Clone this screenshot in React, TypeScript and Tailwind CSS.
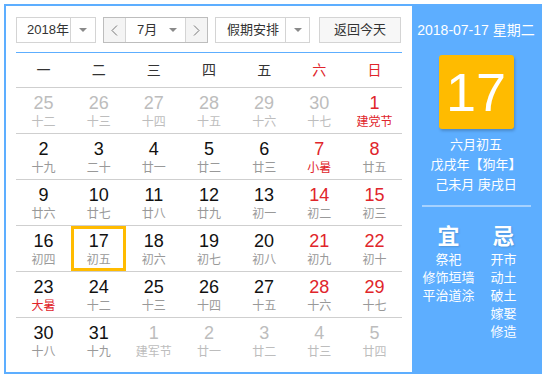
import React from 'react';

type Day = {
  n: number;
  lunar: string;
  other?: boolean;
  redNum?: boolean;
  redLunar?: boolean;
  selected?: boolean;
};

const weeks: Day[][] = [
  [
    { n: 25, lunar: '十二', other: true },
    { n: 26, lunar: '十三', other: true },
    { n: 27, lunar: '十四', other: true },
    { n: 28, lunar: '十五', other: true },
    { n: 29, lunar: '十六', other: true },
    { n: 30, lunar: '十七', other: true },
    { n: 1, lunar: '建党节', redNum: true, redLunar: true },
  ],
  [
    { n: 2, lunar: '十九' },
    { n: 3, lunar: '二十' },
    { n: 4, lunar: '廿一' },
    { n: 5, lunar: '廿二' },
    { n: 6, lunar: '廿三' },
    { n: 7, lunar: '小暑', redNum: true, redLunar: true },
    { n: 8, lunar: '廿五', redNum: true },
  ],
  [
    { n: 9, lunar: '廿六' },
    { n: 10, lunar: '廿七' },
    { n: 11, lunar: '廿八' },
    { n: 12, lunar: '廿九' },
    { n: 13, lunar: '初一' },
    { n: 14, lunar: '初二', redNum: true },
    { n: 15, lunar: '初三', redNum: true },
  ],
  [
    { n: 16, lunar: '初四' },
    { n: 17, lunar: '初五', selected: true },
    { n: 18, lunar: '初六' },
    { n: 19, lunar: '初七' },
    { n: 20, lunar: '初八' },
    { n: 21, lunar: '初九', redNum: true },
    { n: 22, lunar: '初十', redNum: true },
  ],
  [
    { n: 23, lunar: '大暑', redLunar: true },
    { n: 24, lunar: '十二' },
    { n: 25, lunar: '十三' },
    { n: 26, lunar: '十四' },
    { n: 27, lunar: '十五' },
    { n: 28, lunar: '十六', redNum: true },
    { n: 29, lunar: '十七', redNum: true },
  ],
  [
    { n: 30, lunar: '十八' },
    { n: 31, lunar: '十九' },
    { n: 1, lunar: '建军节', other: true },
    { n: 2, lunar: '廿一', other: true },
    { n: 3, lunar: '廿二', other: true },
    { n: 4, lunar: '廿三', other: true },
    { n: 5, lunar: '廿四', other: true },
  ],
];

const weekdays = ['一', '二', '三', '四', '五', '六', '日'];

const Caret = () => (
  <svg width="8" height="4" viewBox="0 0 8 4">
    <path d="M0 0 L8 0 L4 4 Z" fill="#8a8a8a" />
  </svg>
);

const Chevron = ({ dir }: { dir: 'left' | 'right' }) => (
  <svg width="7" height="11" viewBox="0 0 7 11">
    <path
      d={dir === 'left' ? 'M6 0.5 L1 5.5 L6 10.5' : 'M1 0.5 L6 5.5 L1 10.5'}
      fill="none"
      stroke="#777"
      strokeWidth="1"
    />
  </svg>
);

const Cell: React.FC<{ d: Day }> = ({ d }) => {
  const numColor = d.other ? 'text-[#bdbdbd]' : d.redNum ? 'text-[#e0252b]' : 'text-[#111]';
  const lunarColor = d.other ? 'text-[#bdbdbd]' : d.redLunar ? 'text-[#e0252b]' : 'text-[#999]';
  return (
    <div className="relative flex flex-col items-center pt-[4px]">
      {d.selected && <div className="absolute inset-0 border-[3px] border-[#ffbb00]" />}
      <span className={`text-[18px] leading-[22px] ${numColor}`}>{d.n}</span>
      <span className={`text-[12px] leading-[16px] ${lunarColor}`}>{d.lunar}</span>
    </div>
  );
};

const App: React.FC = () => {
  return (
    <div className="w-[548px] h-[379px] bg-white pt-[4px] pl-[4px] font-['Liberation_Sans','Noto_Sans_CJK_SC',sans-serif]">
      <div className="flex w-[538px] h-[370px] border-2 border-[#5daeff]">
        {/* left: calendar */}
        <div className="w-[406px] px-[10px] pt-[11px]">
          <div className="flex items-center h-[26px] text-[13px] text-[#333]">
            <div className="flex h-[26px] w-[80px] border border-[#d4d4d4]">
              <span className="w-[54px] pl-[10px] leading-[24px] border-r border-[#d4d4d4]">2018年</span>
              <span className="flex-1 flex items-center justify-center">
                <Caret />
              </span>
            </div>
            <div className="flex h-[26px] w-[105px] ml-[7px] border border-[#bdbdbd]">
              <span className="w-[22px] flex items-center justify-center bg-[#f4f4f4] border-r border-[#d4d4d4]">
                <Chevron dir="left" />
              </span>
              <span className="w-[60px] flex items-center pl-[11px] pr-[8px] justify-between border-r border-[#d4d4d4]">
                <span>7月</span>
                <Caret />
              </span>
              <span className="flex-1 flex items-center justify-center bg-[#f4f4f4]">
                <Chevron dir="right" />
              </span>
            </div>
            <div className="flex h-[26px] w-[95px] ml-[7px] border border-[#d4d4d4]">
              <span className="w-[70px] pl-[11px] leading-[24px] border-r border-[#d4d4d4]">假期安排</span>
              <span className="flex-1 flex items-center justify-center">
                <Caret />
              </span>
            </div>
            <div className="flex items-center justify-center h-[26px] w-[82px] ml-[9px] border border-[#d4d4d4] bg-[#f7f7f7]">
              返回今天
            </div>
          </div>

          <div className="mt-[9px] border-t border-[#5daeff]">
            <div className="grid grid-cols-7 h-[35px] border-b border-[#cfcfcf] text-[14px]">
              {weekdays.map((w, i) => (
                <div
                  key={w}
                  className={`flex items-center justify-center ${i >= 5 ? 'text-[#e0252b]' : 'text-[#333]'}`}
                >
                  {w}
                </div>
              ))}
            </div>
            {weeks.map((week, wi) => (
              <div
                key={wi}
                className={`grid grid-cols-7 h-[46px] ${wi < weeks.length - 1 ? 'border-b border-[#cfcfcf]' : ''}`}
              >
                {week.map((d, di) => (
                  <Cell key={di} d={d} />
                ))}
              </div>
            ))}
          </div>
        </div>

        {/* right: today panel */}
        <div className="flex-1 bg-[#5daeff] text-white flex flex-col items-center pt-[14px]">
          <div className="text-[14px] leading-[20px]">2018-07-17 星期二</div>
          <div className="mt-[15px] w-[75px] h-[74px] rounded-[3px] bg-[#ffbb00] shadow-[1px_2px_3px_rgba(0,0,0,0.2)] flex items-center justify-center text-[54px] leading-none">
            17
          </div>
          <div className="mt-[6px] text-[13px] leading-[20px] text-center">
            <div>六月初五</div>
            <div>戊戌年【狗年】</div>
            <div>己未月 庚戌日</div>
          </div>
          <div className="mt-[10px] w-[109px] h-[2px] bg-[#a6d2ff]" />
          <div className="mt-[16px] grid grid-cols-2 w-[110px] text-center">
            <div>
              <div className="text-[22px] leading-[28px] font-bold [text-shadow:1px_1px_2px_rgba(0,0,0,0.15)]">宜</div>
              <div className="text-[13px] leading-[18px]">
                <div>祭祀</div>
                <div>修饰垣墙</div>
                <div>平治道涂</div>
              </div>
            </div>
            <div>
              <div className="text-[22px] leading-[28px] font-bold [text-shadow:1px_1px_2px_rgba(0,0,0,0.15)]">忌</div>
              <div className="text-[13px] leading-[18px]">
                <div>开市</div>
                <div>动土</div>
                <div>破土</div>
                <div>嫁娶</div>
                <div>修造</div>
              </div>
            </div>
          </div>
        </div>
      </div>
    </div>
  );
};

export default App;
